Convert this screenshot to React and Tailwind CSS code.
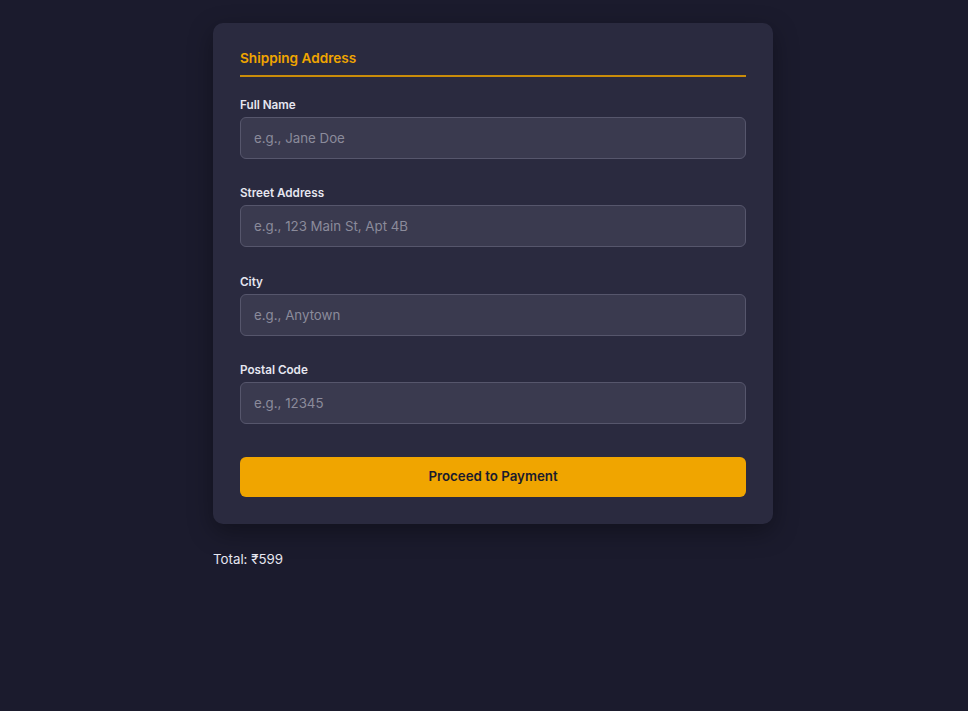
import React from 'react';

const fields = [
  { label: 'Full Name', placeholder: 'e.g., Jane Doe' },
  { label: 'Street Address', placeholder: 'e.g., 123 Main St, Apt 4B' },
  { label: 'City', placeholder: 'e.g., Anytown' },
  { label: 'Postal Code', placeholder: 'e.g., 12345' },
];

export default function App() {
  return (
    <div
      className="min-h-screen bg-[#1b1b2d] pt-[23px]"
      style={{ fontFamily: 'Inter, "Noto Sans", sans-serif' }}
    >
      <div className="w-[560px] ml-[213px]">
        <div className="bg-[#2a2a3f] rounded-[10px] px-[27px] pt-[25px] pb-[27px] shadow-[0_8px_24px_rgba(0,0,0,0.35)]">
          <h2 className="text-[13.6px] leading-[20px] font-semibold text-[#f0a500] pb-[7px] border-b-2 border-[#c98c0a] mb-[19px]">
            Shipping Address
          </h2>
          {fields.map((f) => (
            <div key={f.label} className="mb-[25.4px]">
              <label className="block text-[11.7px] leading-[18px] font-semibold text-[#e6e6f0] mb-[3px]">
                {f.label}
              </label>
              <input
                type="text"
                placeholder={f.placeholder}
                className="w-full h-[42px] px-[13px] rounded-[6px] bg-[#3a3a4f] border border-[#56566c] text-[13.3px] text-[#e6e6f0] placeholder:text-[#8b8b9b] outline-none"
              />
            </div>
          ))}
          <button className="w-full h-[40px] mt-[7px] rounded-[6px] bg-[#f0a500] text-[#1b1b2d] text-[13.3px] font-semibold">
            Proceed to Payment
          </button>
        </div>
        <p className="mt-[25px] text-[13.3px] leading-[20px] text-[#e6e6f0]">Total: ₹599</p>
      </div>
    </div>
  );
}
